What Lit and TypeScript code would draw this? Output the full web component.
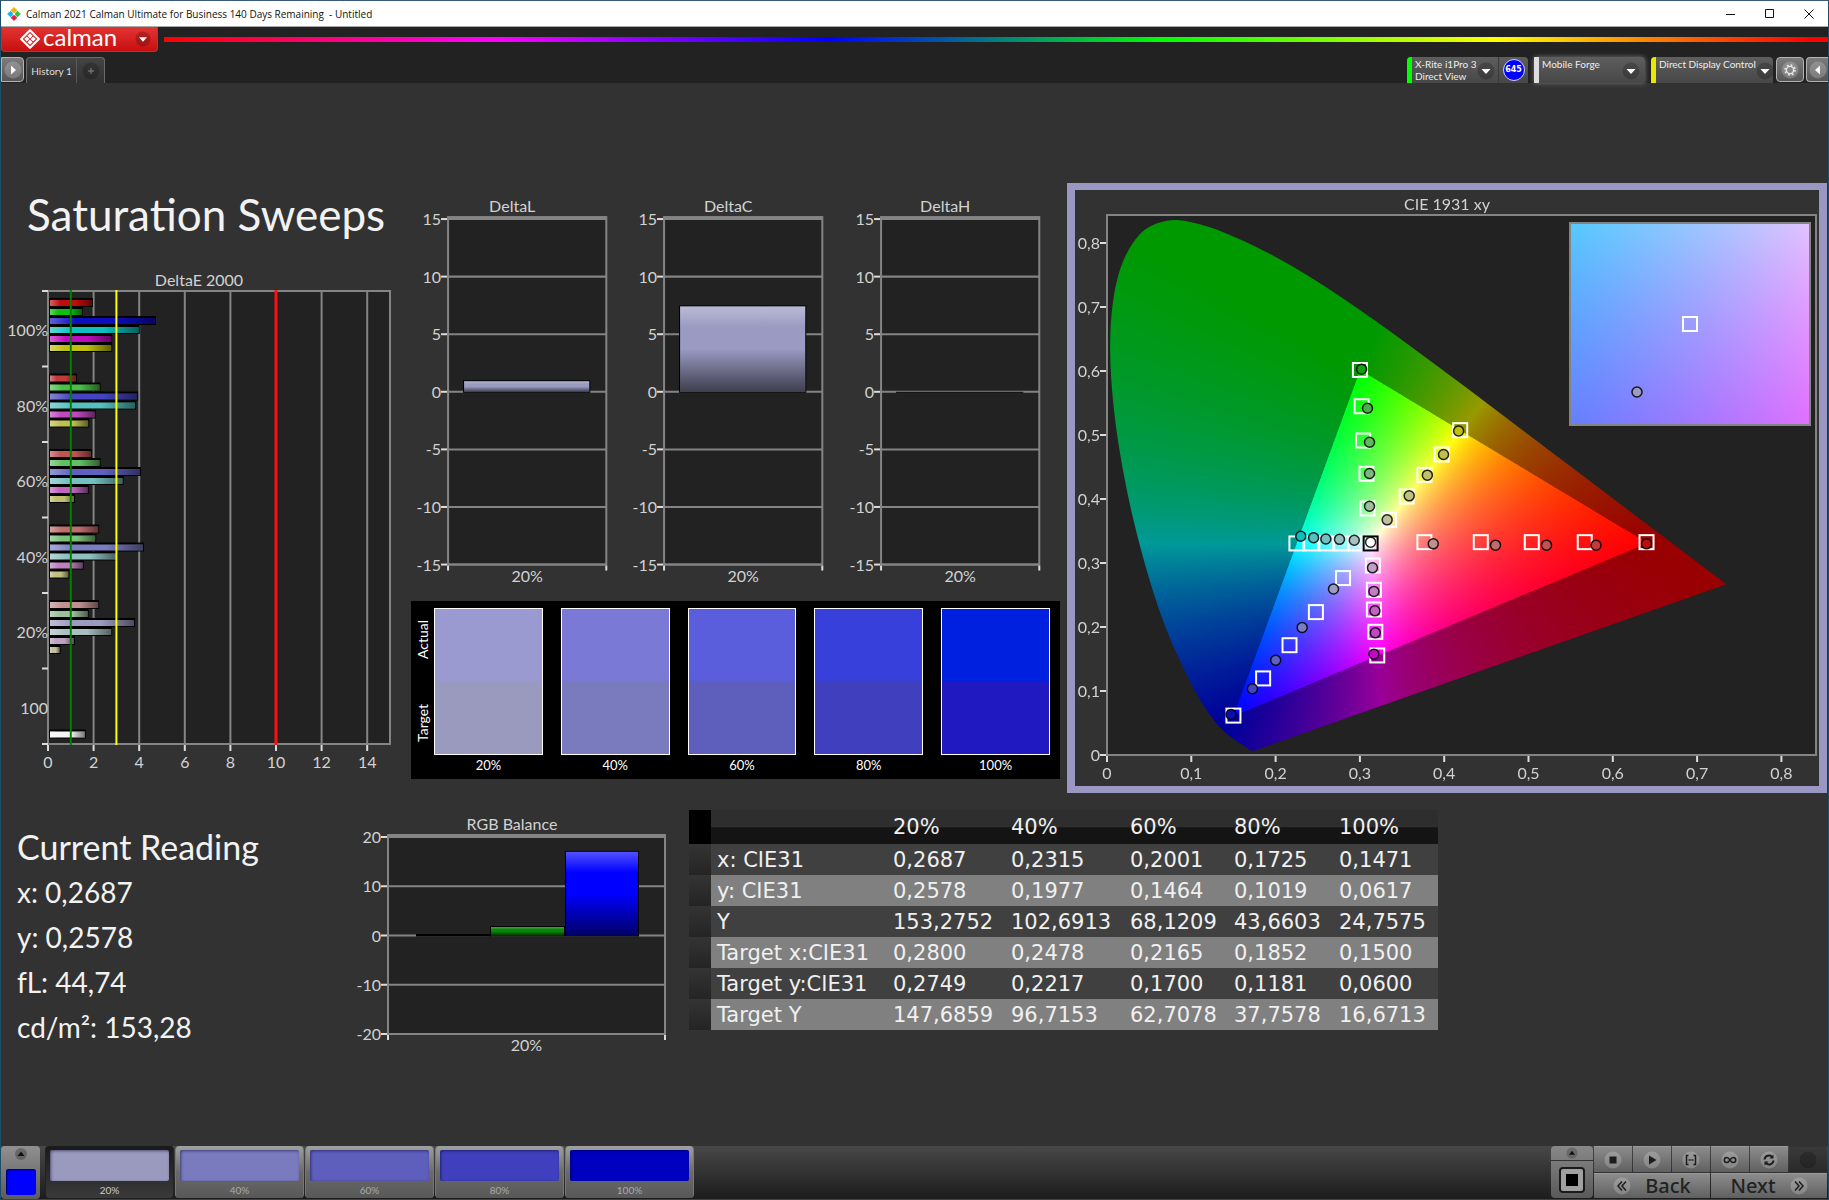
import { LitElement, html, svg, css } from "lit";
import { customElement, property, state } from "lit/decorators.js";
import { classMap } from "lit/directives/class-map.js";
import { styleMap } from "lit/directives/style-map.js";

const chartText = css`
  :host { display: block; }
  svg { display: block; width: 100%; height: auto; overflow: visible; }
  text { font-family: Lato, "Liberation Sans", sans-serif; font-size: 16px; fill: #d2d2d2; }
  .mid { text-anchor: middle; }
  .end { text-anchor: end; }
  .plot { fill: #222; stroke: #848484; stroke-width: 2; }
  .grid { stroke: #848484; stroke-width: 2; }
  .tick { stroke: #dcdcdc; stroke-width: 2; }
`;

/* ---------- DeltaE 2000: horizontal grouped bars ---------- */

const SWEEPS = [
  { label: "100%", values: [1.93, 1.48, 4.69, 3.98, 2.77, 2.77], colors: ["#c00c0c", "#10c010", "#0c0cc0", "#0cc0c0", "#c00cc0", "#c0c010"] },
  { label: "80%", values: [1.23, 2.26, 3.91, 3.82, 2.05, 1.76], colors: ["#c03c3c", "#48c048", "#4444c0", "#54c0c0", "#c048c0", "#c0c050"] },
  { label: "60%", values: [1.88, 2.26, 4.03, 3.27, 1.74, 1.14], colors: ["#c05454", "#62c062", "#6060c0", "#74c0c0", "#c064c0", "#c0c06c"] },
  { label: "40%", values: [2.2, 2.07, 4.16, 2.99, 1.52, 0.89], colors: ["#c06c6c", "#7cc07c", "#7c7cc0", "#90c0c0", "#c080c0", "#c0c084"] },
  { label: "20%", values: [2.2, 1.74, 3.77, 2.77, 1.13, 0.51], colors: ["#c09090", "#9cc09c", "#9c9cc0", "#a8c0c0", "#c0a0c0", "#c0c0a0"] },
  { label: "100", values: [0, 0, 0, 0, 0, 0, 1.61], colors: ["#000", "#000", "#000", "#000", "#000", "#000", "#f4f4f4"] },
];

@customElement("delta-e-chart")
class DeltaEChart extends LitElement {
  static styles = [chartText];

  render() {
    const left = 47, top = 25, width = 342, height = 453;
    const unit = width / 15;
    const band = height / 6;
    const x = (v: number) => left + v * unit;
    const bottom = top + height;
    const limit = (v: number, color: string, w: number) =>
      svg`<line x1=${x(v)} x2=${x(v)} y1=${top - 1} y2=${bottom + 1} stroke=${color} stroke-width=${w}></line>`;
    return html`<svg viewBox="0 0 410 510" role="img" aria-label="DeltaE 2000">
      <defs>
        <linearGradient id="shade">
          <stop offset="0" stop-color="#fff" stop-opacity=".35"></stop>
          <stop offset=".25" stop-color="#fff" stop-opacity="0"></stop>
          <stop offset=".6" stop-color="#000" stop-opacity="0"></stop>
          <stop offset="1" stop-color="#000" stop-opacity=".5"></stop>
        </linearGradient>
      </defs>
      <text class="mid" x="198" y="20">DeltaE 2000</text>
      <rect class="plot" x=${left} y=${top} width=${width} height=${height}></rect>
      ${[2, 4, 6, 8, 10, 12, 14].map((v) => svg`<line class="grid" x1=${x(v)} x2=${x(v)} y1=${top} y2=${bottom}></line>`)}
      ${[0, 2, 4, 6, 8, 10, 12, 14].map((v) => svg`
        <line class="tick" x1=${x(v)} x2=${x(v)} y1=${bottom + 1} y2=${bottom + 7}></line>
        <text class="mid" x=${x(v)} y=${bottom + 24}>${v}</text>`)}
      ${[0, 1, 2, 3, 4, 5, 6].map((i) => svg`<line class="tick" x1=${left - 6} x2=${left} y1=${top + i * band} y2=${top + i * band}></line>`)}
      ${SWEEPS.map((s, i) => svg`
        <text class="end" x=${left} y=${top + i * band + 45}>${s.label}</text>
        ${s.values.map((v, j) => v === 0 ? null : svg`
          <rect x=${left + 1} y=${top + i * band + 7 + j * 9} width=${v * unit} height="9" fill="#000"></rect>
          <rect x=${left + 2} y=${top + i * band + 9 + j * 9} width=${v * unit - 2} height="6" fill=${s.colors[j]}></rect>
          <rect x=${left + 2} y=${top + i * band + 9 + j * 9} width=${v * unit - 2} height="6" fill="url(#shade)"></rect>`)}`)}
      ${limit(1, "#008000", 2)}${limit(3, "#ffff00", 2)}${limit(10, "#ff1010", 3)}
    </svg>`;
  }
}

/* ---------- vertical bar chart around zero ---------- */

interface Bar { from: number; to: number; value: number; color: string; }

@customElement("bar-chart")
class BarChart extends LitElement {
  static styles = [chartText];
  @property() heading = "";
  @property({ type: Number }) max = 15;
  @property({ type: Number }) step = 5;
  @property({ type: Number }) width = 216;
  @property({ type: Number }) plotHeight = 345;
  @property({ type: Number }) plotLeft = 37;
  @property({ type: Number }) plotWidth = 158;
  @property({ type: Number }) headingX = 101;
  @property({ attribute: false }) bars: Bar[] = [];

  render() {
    const top = 27, l = this.plotLeft, w = this.plotWidth, h = this.plotHeight;
    const y = (v: number) => top + ((this.max - v) / (2 * this.max)) * h;
    const marks: number[] = [];
    for (let v = this.max; v >= -this.max; v -= this.step) marks.push(v);
    return html`<svg viewBox="0 0 ${this.width} ${h + 55}" role="img" aria-label=${this.heading}>
      <defs>
        <linearGradient id="shade" x2="0" y2="1">
          <stop offset="0" stop-color="#fff" stop-opacity=".32"></stop>
          <stop offset=".25" stop-color="#fff" stop-opacity="0"></stop>
          <stop offset=".5" stop-color="#000" stop-opacity="0"></stop>
          <stop offset="1" stop-color="#000" stop-opacity=".6"></stop>
        </linearGradient>
      </defs>
      <text class="mid" x=${this.headingX} y="20">${this.heading}</text>
      <rect class="plot" x=${l} y=${top - 2} width=${w} height=${h + 2}></rect>
      ${marks.map((v) => svg`
        <line class="grid" x1=${l} x2=${l + w} y1=${y(v)} y2=${y(v)}></line>
        <line class="tick" x1=${l - 7} x2=${l - 1} y1=${y(v)} y2=${y(v)}></line>
        <text class="end" x=${l - 7} y=${y(v) + 6}>${v}</text>`)}
      <line class="tick" x1=${l} x2=${l} y1=${top + h + 1} y2=${top + h + 6}></line>
      <line class="tick" x1=${l + w} x2=${l + w} y1=${top + h + 1} y2=${top + h + 6}></line>
      ${this.bars.map((b) => {
        const bh = y(0) - y(b.value);
        return svg`
          <rect x=${b.from} y=${y(0) - bh} width=${b.to - b.from} height=${bh + 1} fill="#000"></rect>
          ${bh < 5 ? null : svg`
            <rect x=${b.from + 1} y=${y(0) - bh + 1} width=${b.to - b.from - 2} height=${bh - 1} fill=${b.color}></rect>
            <rect x=${b.from + 1} y=${y(0) - bh + 1} width=${b.to - b.from - 2} height=${bh - 1} fill="url(#shade)"></rect>`}`;
      })}
      <text class="mid" x=${l + w / 2} y=${h + 44}>20%</text>
    </svg>`;
  }
}

/* ---------- CIE 1931 chromaticity diagram ---------- */

type XY = [number, number];

const LOCUS: XY[] = [
  [0.1741, 0.005], [0.1714, 0.0051], [0.1689, 0.0069], [0.1644, 0.0109], [0.1566, 0.0177], [0.151, 0.0227],
  [0.144, 0.0297], [0.1355, 0.0399], [0.1241, 0.0578], [0.1096, 0.0868], [0.0913, 0.1327], [0.0687, 0.2007],
  [0.0454, 0.295], [0.0235, 0.4127], [0.0082, 0.5384], [0.0039, 0.6548], [0.0139, 0.7502], [0.0389, 0.812],
  [0.0743, 0.8338], [0.1142, 0.8262], [0.1547, 0.8059], [0.1929, 0.7816], [0.2296, 0.7543], [0.2658, 0.7243],
  [0.3016, 0.6923], [0.3373, 0.6589], [0.3731, 0.6245], [0.4087, 0.5896], [0.4441, 0.5547], [0.4788, 0.5202],
  [0.5125, 0.4866], [0.5448, 0.4544], [0.5752, 0.4242], [0.6029, 0.3965], [0.627, 0.3725], [0.6658, 0.334],
  [0.6915, 0.3083], [0.719, 0.2809], [0.7347, 0.2653],
];

const TARGETS: XY[] = [
  [0.2247, 0.329], [0.2422, 0.329], [0.2602, 0.329], [0.2778, 0.329], [0.295, 0.329],
  [0.3, 0.6], [0.302, 0.5434], [0.3038, 0.4898], [0.3078, 0.4378], [0.309, 0.3836],
  [0.419, 0.506], [0.3969, 0.468], [0.3765, 0.4362], [0.3555, 0.4023], [0.3346, 0.3659],
  [0.3765, 0.331], [0.4434, 0.331], [0.5039, 0.331], [0.5667, 0.331], [0.64, 0.331],
  [0.3154, 0.2945], [0.3166, 0.2566], [0.3166, 0.2258], [0.3183, 0.1909], [0.3206, 0.154],
  [0.28, 0.2749], [0.2478, 0.2217], [0.2165, 0.17], [0.1852, 0.1181], [0.15, 0.06],
];

const READINGS: [number, number, string][] = [
  [0.2299, 0.3403, "#0cc0c0"], [0.2451, 0.338, "#54c0c0"], [0.2596, 0.336, "#74c0c0"], [0.2758, 0.3354, "#90c0c0"], [0.2933, 0.334, "#a8c0c0"],
  [0.302, 0.6013, "#10a010"], [0.309, 0.5403, "#48b048"], [0.3114, 0.4872, "#62b862"], [0.3114, 0.4383, "#7cb87c"], [0.3114, 0.3872, "#9cc09c"],
  [0.4171, 0.5047, "#c0c010"], [0.3992, 0.468, "#c0c050"], [0.38, 0.4357, "#c0c06c"], [0.3585, 0.4034, "#c0c084"], [0.3323, 0.3659, "#c0c0a0"],
  [0.387, 0.3284, "#c09090"], [0.4609, 0.3263, "#c06c6c"], [0.5214, 0.3263, "#c05454"], [0.5801, 0.3263, "#c03c3c"], [0.64, 0.3284, "#c00c0c"],
  [0.3149, 0.2909, "#c0a0c0"], [0.3166, 0.254, "#c080c0"], [0.3178, 0.2237, "#c064c0"], [0.3183, 0.1893, "#c048c0"], [0.3166, 0.156, "#c00cc0"],
  [0.2687, 0.2578, "#9c9cc0"], [0.2315, 0.1977, "#7c7cc0"], [0.2001, 0.1464, "#6060c0"], [0.1725, 0.1019, "#4444c0"], [0.1471, 0.0617, "#0c0cb0"],
];

const CIE = { width: 744, height: 596, x0: 32, y0: 564, xUnit: 843, yUnit: 640 };
const INSET = { x: 496, y: 34, width: 238, height: 200, cx: 0.28, cy: 0.2749, xUnit: 4735, yUnit: 4000 };

/** Brightest RGB colour with the given chromaticity; dimmed outside the gamut. */
function chroma(x: number, y: number): [number, number, number] {
  const X = x / y, Z = (1 - x - y) / y;
  const lin = [
    3.2406 * X - 1.5372 - 0.4986 * Z,
    -0.9689 * X + 1.8758 + 0.0415 * Z,
    0.0557 * X - 0.204 + 1.057 * Z,
  ];
  const peak = Math.max(...lin);
  const gain = Math.min(...lin) < -0.0005 * peak ? 153 : 255;
  return lin.map((c) => gain * (Math.max(c, 0) / peak)) as [number, number, number];
}

@customElement("cie-chart")
class CieChart extends LitElement {
  static styles = [
    chartText,
    css`
      .stack { display: grid; }
      canvas, svg { grid-area: 1 / 1; width: 100%; height: auto; display: block; }
      .back { fill: #222; }
      .frame { fill: none; stroke: #848484; stroke-width: 2; }
      .target { fill: none; stroke: #fff; stroke-width: 2; }
      .white { fill: none; stroke: #000; stroke-width: 2; }
      .reading { stroke: #000; stroke-opacity: .85; stroke-width: 1.5; }
    `,
  ];

  firstUpdated() {
    const canvas = this.renderRoot.querySelector("canvas");
    const ctx = canvas?.getContext("2d");
    if (!canvas || !ctx) return;
    const k = 2;
    const W = canvas.width, H = canvas.height;
    const image = ctx.createImageData(W, H);
    for (let py = 0; py < H; py++) {
      for (let px = 0; px < W; px++) {
        const y = (CIE.y0 - py / k) / CIE.yUnit;
        if (y <= 0.001) continue;
        const [r, g, b] = chroma((px / k - CIE.x0) / CIE.xUnit, y);
        const i = (py * W + px) * 4;
        image.data[i] = r;
        image.data[i + 1] = g;
        image.data[i + 2] = b;
        image.data[i + 3] = 255;
      }
    }
    ctx.putImageData(image, 0, 0);

    const pts = LOCUS.map(([x, y]): XY => [(CIE.x0 + x * CIE.xUnit) * k, (CIE.y0 - y * CIE.yUnit) * k]);
    ctx.globalCompositeOperation = "destination-in";
    ctx.beginPath();
    ctx.moveTo(...pts[0]);
    for (let i = 0; i < pts.length - 1; i++) {
      const a = pts[Math.max(i - 1, 0)], b = pts[i], c = pts[i + 1], d = pts[Math.min(i + 2, pts.length - 1)];
      ctx.bezierCurveTo(b[0] + (c[0] - a[0]) / 6, b[1] + (c[1] - a[1]) / 6, c[0] - (d[0] - b[0]) / 6, c[1] - (d[1] - b[1]) / 6, c[0], c[1]);
    }
    ctx.closePath();
    ctx.fill();

    const w = INSET.width * k, h = INSET.height * k;
    const zoomed = ctx.createImageData(w, h);
    for (let py = 0; py < h; py++) {
      for (let px = 0; px < w; px++) {
        const c = chroma(INSET.cx + (px - w / 2) / k / INSET.xUnit, INSET.cy - (py - h / 2) / k / INSET.yUnit);
        const i = (py * w + px) * 4;
        zoomed.data.set([c[0], c[1], c[2], 255], i);
      }
    }
    ctx.putImageData(zoomed, INSET.x * k, INSET.y * k);
  }

  render() {
    const px = (x: number) => CIE.x0 + x * CIE.xUnit;
    const py = (y: number) => CIE.y0 - y * CIE.yUnit;
    const right = 741, top = 25, bottom = 565;
    const icx = INSET.x + INSET.width / 2, icy = INSET.y + INSET.height / 2;
    const ticks = [0, 1, 2, 3, 4, 5, 6, 7, 8];
    const label = (n: number) => (n === 0 ? "0" : `0,${n}`);
    return html`<div class="stack">
      <svg viewBox="0 0 744 596" aria-hidden="true">
        <rect class="back" x=${CIE.x0} y=${top} width=${right - CIE.x0} height=${bottom - top}></rect>
      </svg>
      <canvas width=${CIE.width * 2} height=${CIE.height * 2}></canvas>
      <svg viewBox="0 0 744 596" role="img" aria-label="CIE 1931 xy">
        <text class="mid" x="372" y="20">CIE 1931 xy</text>
        <rect class="frame" x=${CIE.x0} y=${top} width=${right - CIE.x0} height=${bottom - top}></rect>
        ${ticks.map((n) => svg`
          <line class="tick" x1=${px(n / 10)} x2=${px(n / 10)} y1=${bottom + 1} y2=${bottom + 7}></line>
          <text class="mid" x=${px(n / 10)} y="589">${label(n)}</text>
          <line class="tick" x1=${CIE.x0 - 7} x2=${CIE.x0 - 1} y1=${py(n / 10) + 1} y2=${py(n / 10) + 1}></line>
          <text class="end" x=${CIE.x0 - 7} y=${py(n / 10) + 7}>${label(n)}</text>`)}
        ${TARGETS.map(([x, y]) => svg`<rect class="target" x=${px(x) - 7} y=${py(y) - 7} width="14" height="14"></rect>`)}
        <rect class="white" x=${px(0.3127) - 7} y=${py(0.329) - 7} width="14" height="14"></rect>
        ${READINGS.map(([x, y, c]) => svg`<circle class="reading" cx=${px(x)} cy=${py(y)} r="5" fill=${c}></circle>`)}
        <circle class="reading" cx=${px(0.3127)} cy=${py(0.331)} r="5" fill="#fff"></circle>
        <rect class="frame" x=${INSET.x - 1} y=${INSET.y - 1} width=${INSET.width + 2} height=${INSET.height + 2}></rect>
        <rect class="target" x=${icx - 7} y=${icy - 7} width="14" height="14"></rect>
        <circle class="reading" cx=${icx - 53} cy=${icy + 68} r="5" fill="#9c9cc0"></circle>
      </svg>
    </div>`;
  }
}

/* ---------- page ---------- */

const COLUMNS = ["20%", "40%", "60%", "80%", "100%"];
const ROWS: [string, string[]][] = [
  ["x: CIE31", ["0,2687", "0,2315", "0,2001", "0,1725", "0,1471"]],
  ["y: CIE31", ["0,2578", "0,1977", "0,1464", "0,1019", "0,0617"]],
  ["Y", ["153,2752", "102,6913", "68,1209", "43,6603", "24,7575"]],
  ["Target x:CIE31", ["0,2800", "0,2478", "0,2165", "0,1852", "0,1500"]],
  ["Target y:CIE31", ["0,2749", "0,2217", "0,1700", "0,1181", "0,0600"]],
  ["Target Y", ["147,6859", "96,7153", "62,7078", "37,7578", "16,6713"]],
];
const SWATCHES = [
  { label: "20%", actual: "#9a9ad0", target: "#9a9abf" },
  { label: "40%", actual: "#7a7ad6", target: "#7a7abf" },
  { label: "60%", actual: "#5a5edc", target: "#5e5ebd" },
  { label: "80%", actual: "#3840dc", target: "#4040be" },
  { label: "100%", actual: "#0020e0", target: "#2018c0" },
];
const PATCHES = ["#9a9abf", "#7a7abf", "#5e5ebd", "#4040be", "#0000c0"];

const caret = html`<svg class="knob" viewBox="0 0 18 18" aria-hidden="true">
  <circle cx="9" cy="9" r="8.5" fill="#000" fill-opacity=".2"></circle><path d="M4.5 7h9l-4.5 5z" fill="#fff"></path></svg>`;

@customElement("app-root")
class AppRoot extends LitElement {
  static styles = css`
    :host { display: block; font-family: Lato, "Liberation Sans", sans-serif; color: #f2f2f2; }
    * { box-sizing: border-box; }
    button { font: inherit; color: inherit; border: 0; padding: 0; margin: 0; background: none; display: flex; align-items: center; justify-content: center; cursor: pointer; }
    h1, h2, p { margin: 0; font-weight: 400; }
    svg { display: block; }
    .window { min-height: 100vh; display: flex; flex-direction: column; background: #323232; border: 1px solid #1d4d68; border-top-color: #3a5a7c; }

    .titlebar { height: 26px; background: #fff; color: #111; display: flex; align-items: center; border-bottom: 1px solid #aaa; }
    .titlebar .app { width: 14px; height: 14px; margin: 0 5px 0 6px; }
    .titlebar .name { font: 10px/16px "Open Sans", "Noto Sans", sans-serif; white-space: pre; flex: 1; }
    .titlebar button { width: 39px; height: 25px; }

    .brandbar { height: 29px; background: #222; display: flex; align-items: flex-start; gap: 6px; }
    .brand { width: 157px; height: 25px; background: linear-gradient(#e23434, #c90f0f); border: 1px solid #8f4444; border-top: 0; border-radius: 0 0 4px 4px; justify-content: flex-start; padding-left: 18px; color: #fff; }
    .brand .word { font-size: 24px; line-height: 22px; font-weight: 400; margin: 0 auto 4px 3px; }
    .brand .mark { width: 20px; height: 20px; }
    .brand .knob { width: 16px; height: 16px; margin-right: 6px; }
    .spectrum { flex: 1; height: 5px; margin-top: 10px; background: linear-gradient(90deg, #f00, #f0f 20%, #00f 40%, #0f0 60%, #ff0 80%, #f00 99%); }

    .tabs { height: 27px; background: #222; display: flex; align-items: flex-start; padding-top: 1px; font-size: 10px; }
    .small { width: 23px; height: 25px; border: 1px solid #b4b4b4; border-radius: 0 4px 4px 0; background: linear-gradient(#7c7c7c, #565656); }
    .small svg { width: 18px; height: 18px; }
    .history { display: flex; margin-left: 2px; height: 26px; border: 1px solid #6a6a6a; border-bottom: 0; border-radius: 4px 4px 0 0; background: linear-gradient(#444, #303030); }
    .history .tab { width: 49px; color: #ddd; }
    .history .add { width: 28px; border-left: 1px solid #5a5a5a; }
    .history svg { width: 18px; height: 18px; }
    .space { flex: 1; }
    .device { height: 26px; display: flex; align-items: flex-start; border-radius: 4px 4px 0 0; background: linear-gradient(#5e5e5e, #474747); margin-right: 6px; overflow: hidden; color: #eee; line-height: 12px; }
    .device button { height: 26px; align-items: flex-start; justify-content: flex-start; text-align: left; padding-top: 1px; }
    .device .tag { width: 5px; height: 26px; margin: -1px 3px 0 0; flex: none; }
    .device .lines { flex: 1; white-space: nowrap; }
    .device .knob { width: 18px; height: 18px; margin: 4px 5px 0 0; flex: none; }
    .green { background: #0f0; } .silver { background: #ddd; } .yellow { background: #e8e800; }
    .meter-menu { width: 91px; } .forge-menu { width: 111px; } .display-menu { width: 122px; }
    .meter-menu .knob { margin-right: 6px; }
    .glow { box-shadow: 0 0 5px #777; overflow: visible; }
    .count { width: 30px; height: 26px; display: flex; align-items: center; justify-content: center; border-left: 1px solid #3a3a3a; }
    .count span { width: 22px; height: 22px; border-radius: 50%; background: #00f; border: 1px solid #cfcfff; color: #fff; font: 700 8px/20px "DejaVu Sans", sans-serif; text-align: center; }
    .round { border-radius: 4px; width: 28px; margin-left: -3px; }
    .last { border-radius: 4px 0 0 4px; border-right: 0; margin-left: 2px; width: 22px; }

    main { flex: 1; padding-top: 100px; }
    .top { display: grid; grid-template-columns: 410fr 649fr 767fr; padding-right: 1px; }
    .top .left h1 { font-size: 44px; line-height: 54px; padding: 4px 0 0 26px; height: 83px; white-space: nowrap; }
    .deltas { display: grid; grid-template-columns: repeat(3, 1fr); padding-top: 9px; }
    .compare { background: #000; margin-top: 8px; display: grid; grid-template-columns: 23px 1fr; padding: 7px 10px 4px 0; color: #fff; font-size: 13px; line-height: 20px; }
    .side { writing-mode: vertical-rl; transform: rotate(180deg); display: flex; justify-content: space-between; align-items: center; font-size: 14px; height: 146px; padding: 12px 0; }
    .pairs { display: grid; grid-template-columns: repeat(5, 1fr); gap: 18px; text-align: center; }
    .pair { height: 147px; border: 1px solid #fff; display: flex; flex-direction: column; }
    .pair div { flex: 1; }
    .right { padding-left: 7px; }
    .gamut { border: 7px solid #9a98c2; border-width: 7px 8px; }

    .bottom { display: grid; grid-template-columns: 340fr 348fr 749fr 390fr; margin-top: 17px; align-items: start; }
    .reading { padding: 14px 0 0 16px; font-size: 28px; line-height: 45px; white-space: nowrap; }
    .reading h2 { font-size: 34px; line-height: 46px; }

    table { width: 100%; border-collapse: collapse; table-layout: fixed; font: 21px/26px "DejaVu Sans", "Noto Sans", sans-serif; color: #f0f0f0; }
    th, td { font-weight: 400; text-align: left; padding: 0; height: 31px; white-space: nowrap; }
    th.label, td.label { padding-left: 6px; }
    thead th { height: 34px; background: linear-gradient(#2e2e2e 50%, #141414 52%); }
    thead th.strip { background: #000; }
    th.strip, td.strip { background: linear-gradient(#343434, #242424); }
    tbody tr { background: #404040; }
    tbody tr:nth-child(even) { background: #808080; }
    .c0 { width: 22px; } .c1 { width: 182px; } .c2 { width: 118px; } .c3 { width: 119px; } .c4 { width: 104px; } .c5 { width: 105px; }

    footer { height: 53px; display: flex; background: linear-gradient(#484848, #1c1c1c); font-size: 10px; color: #aaa; }
    .level { width: 39px; background: linear-gradient(#909090, #5c5c5c); border-radius: 4px; display: flex; flex-direction: column; align-items: center; justify-content: space-between; padding: 1px 0 4px; margin-right: 5px; }
    .level .blue { width: 30px; height: 26px; border-radius: 3px; background: #00f; box-shadow: inset 1px 1px 2px #005; }
    .level svg { width: 14px; height: 14px; }
    .patches { display: flex; gap: 1px; }
    .patch { width: 129px; height: 52px; border-radius: 4px; flex-direction: column; padding: 4px 4px 0; background: linear-gradient(#a0a0a0, #6a6a6a 50%, #585858); justify-content: flex-start; line-height: 18px; border: 1px solid #777; border-width: 0 1px; }
    .patch.active { background: linear-gradient(#1a1a1a, #3a3a3a); color: #ccc; border-color: #222; }
    .patch .chip { width: 100%; height: 31px; border-radius: 2px; box-shadow: inset 1px 1px 3px rgba(0, 0, 40, .5); flex: none; }
    .stopper { width: 42px; display: flex; flex-direction: column; border-radius: 4px; overflow: hidden; background: linear-gradient(#888, #5a5a5a); margin-right: 1px; height: 52px; }
    .stopper .up { height: 15px; border-bottom: 1px solid #333; }
    .stopper .up svg { width: 12px; height: 12px; }
    .stopper .halt { flex: 1; }
    .stopper .halt svg { width: 28px; height: 28px; }
    .transport { display: grid; grid-template-columns: repeat(6, 38px); column-gap: 1px; row-gap: 1px; height: 52px; grid-template-rows: 26px 25px; width: 234px; }
    .transport button { background: linear-gradient(#8c8c8c, #606060); border-top: 1px solid #999; }
    .transport button svg { width: 18px; height: 18px; }
    .transport button.off { background: linear-gradient(#3a3a3a, #2a2a2a); border-top-color: #333; }
    .transport .wide { grid-column: span 3; font: 500 20px/24px "Noto Sans", "Open Sans", sans-serif; color: #222; gap: 14px; }
  `;

  @state() private patch = 0;

  private knobIcon(inner: unknown) {
    return html`<svg viewBox="0 0 18 18" aria-hidden="true">
      <circle cx="9" cy="9" r="8.5" fill="#fff" fill-opacity=".2"></circle>${inner}</svg>`;
  }

  private renderHead() {
    return html`
      <header class="titlebar">
        <svg class="app" viewBox="0 0 14 14" aria-hidden="true">
          <path d="M7 0l3.300 3.300L7 6.600 3.700 3.300z" fill="#f7b500"></path>
          <path d="M3.500 3.700l3.300 3.300-3.300 3.300L.2 7z" fill="#19b5e8"></path>
          <path d="M10.500 3.700L13.800 7l-3.300 3.300L7.200 7z" fill="#2fc14c"></path>
          <path d="M7 7.400l3.300 3.300L7 14l-3.300-3.300z" fill="#e8234a"></path>
          <path d="M7 5.500L8.500 7 7 8.500 5.500 7z" fill="#fff"></path>
        </svg>
        <span class="name">Calman 2021 Calman Ultimate for Business 140 Days Remaining  - Untitled</span>
        <button aria-label="Minimize"><svg width="10" height="10"><path d="M0 5.500h9" stroke="#111"></path></svg></button>
        <button aria-label="Maximize"><svg width="10" height="10"><path d="M.5.5h8v8h-8z" fill="none" stroke="#111"></path></svg></button>
        <button aria-label="Close"><svg width="10" height="10"><path d="M.5.5l9 9M9.500.5l-9 9" stroke="#111"></path></svg></button>
      </header>
      <div class="brandbar">
        <button class="brand" aria-label="calman menu">
          <svg class="mark" viewBox="0 0 20 20" aria-hidden="true">
            <path d="M10 1.200L18.800 10 10 18.800 1.200 10z" fill="none" stroke="#fff" stroke-width="2.200" stroke-linejoin="round"></path>
            <g fill="#fff"><path d="M10 4.200l2.600 2.600L10 9.400 7.400 6.800z"></path><path d="M6.800 7.400L9.400 10l-2.600 2.600L4.200 10z"></path>
            <path d="M13.200 7.400l2.600 2.600-2.600 2.600L10.600 10z"></path><path d="M10 10.600l2.600 2.600-2.600 2.600-2.600-2.600z"></path></g>
          </svg>
          <span class="word">calman</span>${caret}
        </button>
        <div class="spectrum"></div>
      </div>
      <nav class="tabs">
        <button class="small" aria-label="Expand">${this.knobIcon(svg`<path d="M7 4.500l5 4.500-5 4.500z" fill="#fff"></path>`)}</button>
        <div class="history">
          <button class="tab">History 1</button>
          <button class="add" aria-label="Add history"><svg viewBox="0 0 18 18"><circle cx="9" cy="9" r="8.500" fill="#000" fill-opacity=".2"></circle><path d="M9 6v6M6 9h6" stroke="#888"></path></svg></button>
        </div>
        <span class="space"></span>
        <div class="device">
          <button class="meter-menu"><span class="tag green"></span><span class="lines">X-Rite i1Pro 3<br>Direct View</span>${caret}</button>
          <div class="count"><span>645</span></div>
        </div>
        <div class="device glow"><button class="forge-menu"><span class="tag silver"></span><span class="lines">Mobile Forge</span>${caret}</button></div>
        <div class="device"><button class="display-menu"><span class="tag yellow"></span><span class="lines">Direct Display Control</span>${caret}</button></div>
        <button class="small round" aria-label="Settings">${this.knobIcon(svg`
          <circle cx="9" cy="9" r="3.600" fill="none" stroke="#e8e8e8" stroke-width="1.400"></circle>
          <circle cx="9" cy="9" r="5" fill="none" stroke="#e8e8e8" stroke-width="1.600" stroke-dasharray="1.900 2.027"></circle>`)}</button>
        <button class="small last" aria-label="Collapse">${this.knobIcon(svg`<path d="M11 4.500L6 9l5 4.500z" fill="#fff"></path>`)}</button>
      </nav>`;
  }

  private renderTable() {
    return html`<table>
      <colgroup>${[0, 1, 2, 3, 4, 5].map((n) => html`<col class="c${n}">`)}<col></colgroup>
      <thead><tr><th class="strip"></th><th class="label"></th>${COLUMNS.map((c) => html`<th scope="col">${c}</th>`)}</tr></thead>
      <tbody>${ROWS.map(([label, cells]) => html`
        <tr><td class="strip"></td><th class="label" scope="row">${label}</th>${cells.map((c) => html`<td>${c}</td>`)}</tr>`)}
      </tbody>
    </table>`;
  }

  private renderFooter() {
    const ink = "#1c1c1c";
    return html`<footer>
      <div class="level">
        <svg viewBox="0 0 14 14" aria-hidden="true"><circle cx="7" cy="7" r="6" fill="#000" fill-opacity=".25"></circle><path d="M3.500 9L7 4.500 10.500 9z" fill="#111"></path></svg>
        <div class="blue"></div>
      </div>
      <div class="patches">${PATCHES.map((color, i) => html`
        <button class=${classMap({ patch: true, active: i === this.patch })} @click=${() => (this.patch = i)}>
          <span class="chip" style=${styleMap({ background: color })}></span>${COLUMNS[i]}
        </button>`)}</div>
      <span class="space"></span>
      <div class="stopper">
        <button class="up" aria-label="More"><svg viewBox="0 0 14 14"><circle cx="7" cy="7" r="6.500" fill="#000" fill-opacity=".2"></circle><path d="M3.500 9L7 4.500 10.500 9z" fill="#111"></path></svg></button>
        <button class="halt" aria-label="Stop all"><svg viewBox="0 0 28 28"><rect x="2" y="2" width="24" height="24" rx="3" fill="#a0a0a0" stroke="#1a1a1a" stroke-width="2"></rect><rect x="8" y="8" width="12" height="12" fill="#000"></rect></svg></button>
      </div>
      <div class="transport">
        <button aria-label="Stop">${this.knobIcon(svg`<path d="M5.500 5.500h7v7h-7z" fill=${ink}></path>`)}</button>
        <button aria-label="Play">${this.knobIcon(svg`<path d="M6 4.500l7.500 4.500L6 13.500z" fill=${ink}></path>`)}</button>
        <button aria-label="Range">${this.knobIcon(svg`<path d="M6.500 4.500h-2v9h2M11.500 4.500h2v9h-2" fill="none" stroke=${ink} stroke-width="1.500"></path><path d="M6.500 9h5" stroke=${ink} stroke-width="1.600" stroke-dasharray="1.300 .6"></path>`)}</button>
        <button aria-label="Continuous">${this.knobIcon(svg`<path d="M9 9C7.800 7.200 7 6.500 5.800 6.500a2.500 2.500 0 0 0 0 5C7 11.500 7.800 10.800 9 9s2-2.500 3.200-2.500a2.500 2.500 0 0 1 0 5C11 11.500 10.200 10.800 9 9z" fill="none" stroke=${ink} stroke-width="1.500"></path>`)}</button>
        <button aria-label="Refresh">${this.knobIcon(svg`<path d="M4.500 8.500A4.500 4.500 0 0 1 12 5.700M13.500 9.500A4.500 4.500 0 0 1 6 12.300" fill="none" stroke=${ink} stroke-width="2"></path><path d="M13.500 3.500v4h-4zM4.500 14.500v-4h4z" fill=${ink}></path>`)}</button>
        <button class="off" aria-label="Record" disabled><svg viewBox="0 0 18 18"><circle cx="9" cy="9" r="8.500" fill="#000" fill-opacity=".2"></circle></svg></button>
        <button class="wide">${this.knobIcon(svg`<path d="M9 4.500L5 9l4 4.500M13 4.500L9 9l4 4.500" fill="none" stroke=${ink} stroke-width="1.500"></path>`)}Back</button>
        <button class="wide">Next${this.knobIcon(svg`<path d="M5 4.500L9 9l-4 4.500M9 4.500L13 9l-4 4.500" fill="none" stroke=${ink} stroke-width="1.500"></path>`)}</button>
      </div>
    </footer>`;
  }

  render() {
    const lilac = "#9a9ac2";
    return html`<div class="window">
      ${this.renderHead()}
      <main>
        <section class="top">
          <div class="left">
            <h1>Saturation Sweeps</h1>
            <delta-e-chart></delta-e-chart>
          </div>
          <div class="middle">
            <div class="deltas">
              <bar-chart heading="DeltaL" .bars=${[{ from: 52, to: 179, value: 1, color: lilac }]}></bar-chart>
              <bar-chart heading="DeltaC" .bars=${[{ from: 52, to: 179, value: 7.5, color: lilac }]}></bar-chart>
              <bar-chart heading="DeltaH" .bars=${[{ from: 52, to: 179, value: 0, color: lilac }]}></bar-chart>
            </div>
            <div class="compare">
              <div class="side"><span>Target</span><span>Actual</span></div>
              <div class="pairs">${SWATCHES.map((s) => html`<div>
                <div class="pair"><div style=${styleMap({ background: s.actual })}></div><div style=${styleMap({ background: s.target })}></div></div>
                ${s.label}</div>`)}
              </div>
            </div>
          </div>
          <div class="right"><div class="gamut"><cie-chart></cie-chart></div></div>
        </section>
        <section class="bottom">
          <div class="reading">
            <h2>Current Reading</h2>
            <p>x: 0,2687</p><p>y: 0,2578</p><p>fL: 44,74</p><p>cd/m²: 153,28</p>
          </div>
          <bar-chart heading="RGB Balance" max="20" step="10" width="348" plotHeight="197" plotLeft="47" plotWidth="277" headingX="171"
            .bars=${[{ from: 75, to: 150, value: 0.3, color: "#c00000" }, { from: 149, to: 224, value: 1.9, color: "#0a860a" }, { from: 224, to: 298, value: 17.2, color: "#0000ff" }]}></bar-chart>
          ${this.renderTable()}
        </section>
      </main>
      ${this.renderFooter()}
    </div>`;
  }
}
